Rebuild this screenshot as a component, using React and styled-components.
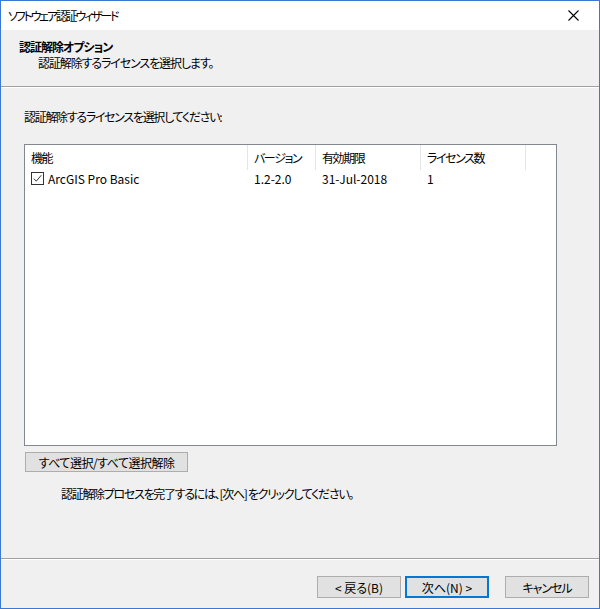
import React from 'react';
import styled, { createGlobalStyle } from 'styled-components';

const GlobalStyle = createGlobalStyle`
  html, body {
    margin: 0;
    padding: 0;
    background: #f0f0f0;
  }
  body {
    font-family: "Noto Sans CJK JP", "Noto Sans", sans-serif;
    font-size: 12px;
    color: #000;
    font-feature-settings: "palt";
  }
`;

const Window = styled.div`
  width: 600px;
  height: 609px;
  box-sizing: border-box;
  border: 1px solid #3b78d6;
  background: #f0f0f0;
  display: flex;
  flex-direction: column;
`;

const TitleBar = styled.div`
  height: 28px;
  background: #fff;
  display: flex;
  align-items: center;
  justify-content: space-between;
  padding: 0 0 1px 7px;
  flex-shrink: 0;
`;

const Title = styled.span`
  letter-spacing: -2.2px;
`;

const CloseButton = styled.div`
  width: 46px;
  height: 28px;
  display: flex;
  align-items: center;
  justify-content: center;
  margin-right: 3px;
`;

const Header = styled.div`
  height: 57px;
  border-bottom: 1px solid #a0a0a0;
  box-shadow: 0 1px 0 #fff;
  padding: 8px 0 0 18px;
  box-sizing: border-box;
  flex-shrink: 0;
`;

const Heading = styled.div`
  font-weight: bold;
  line-height: 17px;
  letter-spacing: -1px;
`;

const SubHeading = styled.div`
  padding-left: 19px;
  line-height: 16px;
  letter-spacing: -1.1px;
`;

const Body = styled.div`
  flex: 1;
  padding: 22px 42px 0 23px;
  display: flex;
  flex-direction: column;
`;

const Instruction = styled.div`
  line-height: 16px;
  margin-bottom: 19px;
  letter-spacing: -1.3px;
`;

const ListBox = styled.div`
  height: 302px;
  box-sizing: border-box;
  border: 1px solid #828790;
  background: #fff;
`;

const Row = styled.div`
  display: grid;
  grid-template-columns: 223px 68px 105px 105px;
  height: ${p => (p.$header ? '25px' : '15px')};
`;

const Cell = styled.div`
  padding-left: ${p => p.$pad || 6}px;
  height: 100%;
  display: flex;
  align-items: center;
  gap: 4px;
  border-right: ${p => (p.$header ? '1px solid #e5e5e5' : 'none')};
  white-space: nowrap;
  letter-spacing: ${p => (p.$header ? '-1.4px' : '0')};
`;

const Check = styled.span`
  width: 11px;
  height: 11px;
  border: 1px solid #333;
  display: inline-flex;
  align-items: center;
  justify-content: center;
  background: #fff;
`;

const Button = styled.button`
  font: inherit;
  font-feature-settings: "palt";
  letter-spacing: ${p => p.$ls || 0}px;
  height: ${p => p.$h || 22}px;
  width: ${p => p.$w}px;
  padding: 0;
  background: #e1e1e1;
  color: #000;
  border: ${p => (p.$default ? '2px solid #0078d7' : '1px solid #adadad')};
  box-sizing: border-box;
`;

const SelectRow = styled.div`
  margin-top: 6px;
  margin-left: 1px;
`;

const Note = styled.div`
  margin-top: 14px;
  padding-left: 37px;
  line-height: 16px;
  letter-spacing: -1.3px;
`;

const Footer = styled.div`
  height: 50px;
  box-sizing: border-box;
  border-top: 1px solid #a0a0a0;
  box-shadow: inset 0 1px 0 #fff;
  display: flex;
  justify-content: flex-end;
  align-items: flex-start;
  padding: 17px 10px 0 0;
  gap: 4px;
  flex-shrink: 0;
`;

const Spacer = styled.div`
  width: 8px;
`;

const columns = ['機能', 'バージョン', '有効期限', 'ライセンス数'];

export default function App() {
  return (
    <>
      <GlobalStyle />
      <Window>
        <TitleBar>
          <Title>ソフトウェア認証ウィザード</Title>
          <CloseButton>
            <svg width="11" height="11" viewBox="0 0 11 11">
              <path d="M0.5 0.5L10.5 10.5M10.5 0.5L0.5 10.5" stroke="#000" strokeWidth="1.1" />
            </svg>
          </CloseButton>
        </TitleBar>
        <Header>
          <Heading>認証解除オプション</Heading>
          <SubHeading>認証解除するライセンスを選択します。</SubHeading>
        </Header>
        <Body>
          <Instruction>認証解除するライセンスを選択してください:</Instruction>
          <ListBox>
            <Row $header>
              {columns.map(c => (
                <Cell key={c} $header>{c}</Cell>
              ))}
            </Row>
            <Row>
              <Cell $pad={6}>
                <Check>
                  <svg width="9" height="9" viewBox="0 0 9 9">
                    <path d="M0.8 4.6L3.3 7.2L8.3 1.2" fill="none" stroke="#333" strokeWidth="1" />
                  </svg>
                </Check>
                ArcGIS Pro Basic
              </Cell>
              <Cell>1.2-2.0</Cell>
              <Cell>31-Jul-2018</Cell>
              <Cell>1</Cell>
            </Row>
          </ListBox>
          <SelectRow>
            <Button $w={163} $h={20} $ls={-0.5}>すべて選択/すべて選択解除</Button>
          </SelectRow>
          <Note>認証解除プロセスを完了するには、[次へ] をクリックしてください。</Note>
        </Body>
        <Footer>
          <Button $w={84}>&lt; 戻る(B)</Button>
          <Button $w={84} $default>次へ(N) &gt;</Button>
          <Spacer />
          <Button $w={84} $ls={-1}>キャンセル</Button>
        </Footer>
      </Window>
    </>
  );
}
